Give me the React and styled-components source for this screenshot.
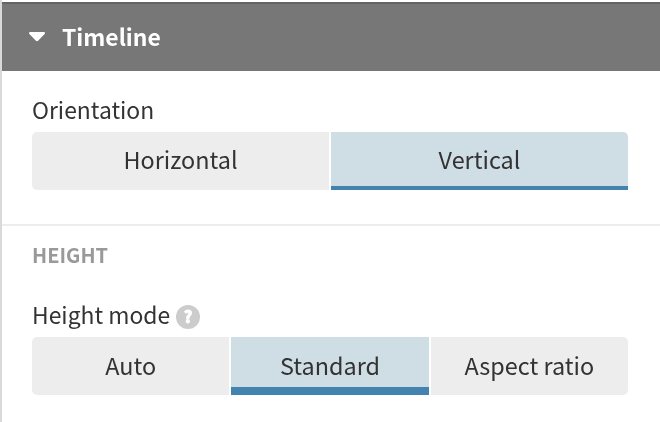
import React from "react";
import styled, { createGlobalStyle } from "styled-components";

const GlobalStyle = createGlobalStyle`
  * {
    box-sizing: border-box;
  }

  body {
    margin: 0;
    background-color: #fff;
    color: #333;
    font-family: "Noto Sans CJK SC", "Open Sans", sans-serif;
    font-size: 23px;
    overflow: hidden;
  }
`;

const Panel = styled.div`
  height: 422px;
  padding-top: 2px;
  border-left: 2px solid #d9d9d9;
  will-change: transform;
`;

const Header = styled.header`
  display: flex;
  align-items: center;
  height: 69px;
  padding-bottom: 3px;
  padding-left: 27px;
  border-top: 2px solid #646464;
  background-color: #777;
  color: #fff;
`;

const Caret = styled.svg`
  display: block;
  width: 16px;
  height: 10px;
  margin-top: 1px;
  margin-right: 17px;
`;

const Title = styled.h2`
  margin: 0;
  font-size: 22.9px;
  font-weight: 700;
  line-height: 36px;
`;

const Section = styled.section`
  padding: ${(props) => (props.$titled ? "15px" : "21px")} 32px 34px 30px;

  & + & {
    border-top: 2px solid #ededed;
  }
`;

const SectionTitle = styled.h3`
  margin: 0 0 32px;
  color: #999;
  font-size: 20px;
  font-weight: 700;
  line-height: 28px;
  text-transform: uppercase;
`;

const Label = styled.div`
  display: flex;
  align-items: center;
  height: ${(props) => (props.$tight ? "36px" : "40px")};
  padding-bottom: ${(props) => (props.$tight ? "10px" : "6px")};
  font-size: 22.9px;
  line-height: 26px;
`;

const Help = styled.span`
  display: flex;
  align-items: center;
  justify-content: center;
  width: 24px;
  height: 24px;
  margin-top: 6px;
  margin-left: 6px;
  padding-bottom: 2px;
  border-radius: 50%;
  background-color: #ccc;
  color: #fff;
  font-size: 16px;
  font-weight: 900;
  line-height: 22px;
  -webkit-text-stroke: 0.8px #fff;
`;

const ButtonGroup = styled.div`
  display: flex;
  gap: 2px;
  height: 58px;
`;

const Option = styled.button`
  flex: 1 1 0;
  padding: 0 0 ${(props) => (props.$raised ? "4px" : "2px")};
  border: none;
  background-color: ${(props) => (props.$active ? "#cfdde5" : "#ededed")};
  box-shadow: ${(props) =>
    props.$active ? `inset 0 -${props.$line}px #4383af` : "none"};
  color: #333;
  font: inherit;
  font-size: 23.4px;
  line-height: 54px;
  white-space: nowrap;
  cursor: pointer;

  &:first-child {
    border-radius: 5px 0 0 5px;
  }

  &:last-child {
    border-radius: ${(props) => (props.$active ? "0 5px 0 0" : "0 5px 5px 0")};
  }
`;

function Choice({ options, value, line, raised }) {
  return (
    <ButtonGroup>
      {options.map((option) => (
        <Option
          key={option}
          $active={option === value}
          $line={line}
          $raised={raised}
        >
          {option}
        </Option>
      ))}
    </ButtonGroup>
  );
}

export default function App() {
  return (
    <>
      <GlobalStyle />
      <Panel>
        <Header>
          <Caret viewBox="0 0 16 10">
            <path
              d="M1.2 0h13.6c1.1 0 1.6 1.2.8 2L9.1 8.8c-.6.6-1.6.6-2.2 0L.4 2C-.4 1.2 0 0 1.2 0z"
              fill="#fff"
            />
          </Caret>
          <Title>Timeline</Title>
        </Header>
        <Section>
          <Label>Orientation</Label>
          <Choice
            options={["Horizontal", "Vertical"]}
            value="Vertical"
            line={4}
            raised
          />
        </Section>
        <Section $titled>
          <SectionTitle>Height</SectionTitle>
          <Label $tight>
            Height mode
            <Help>?</Help>
          </Label>
          <Choice
            options={["Auto", "Standard", "Aspect ratio"]}
            value="Standard"
            line={8}
          />
        </Section>
      </Panel>
    </>
  );
}
